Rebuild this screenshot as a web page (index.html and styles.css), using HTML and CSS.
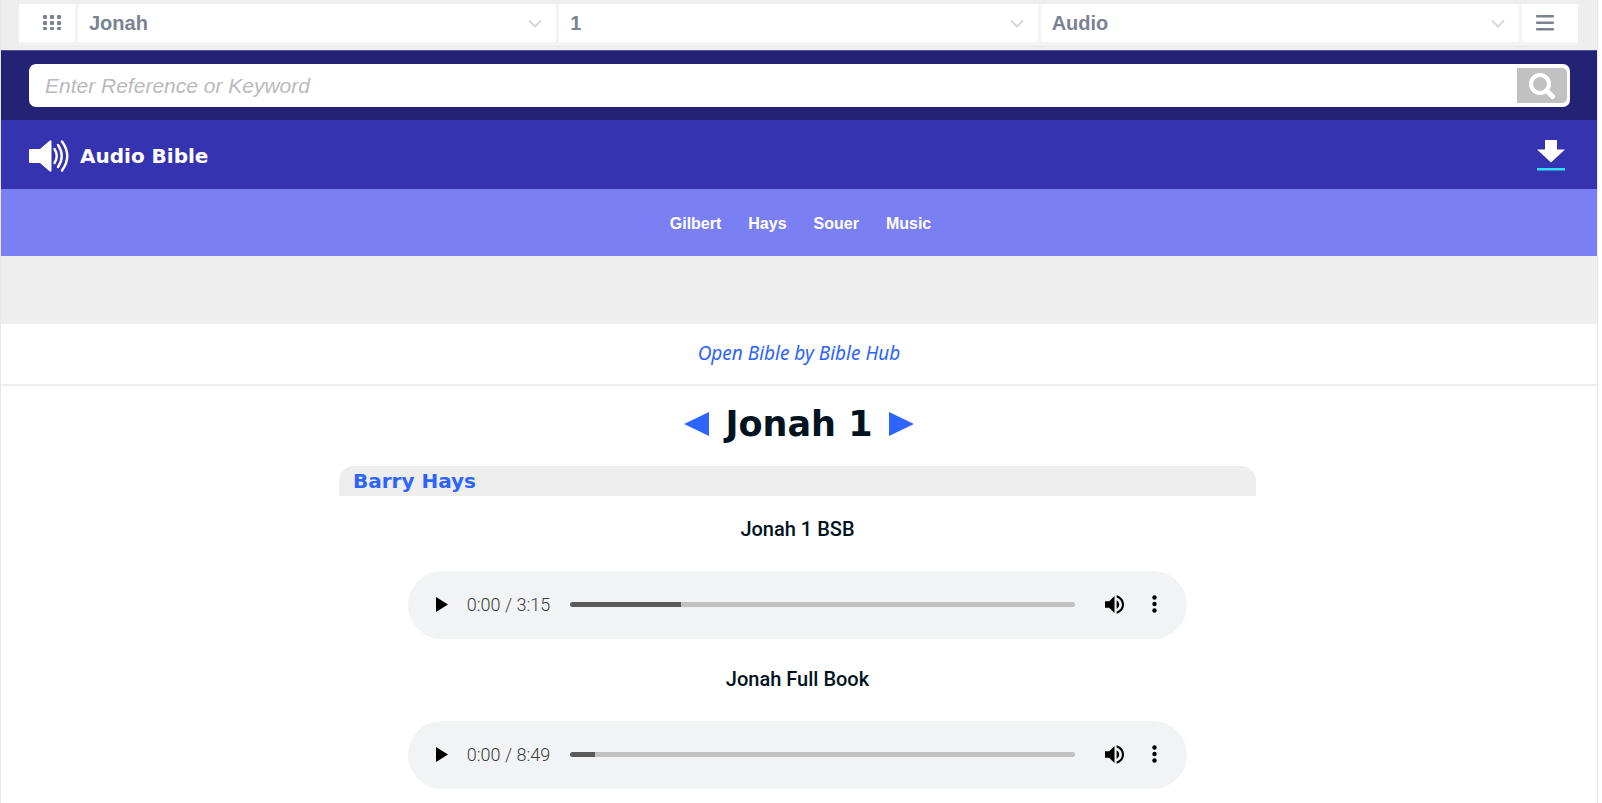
FILE: index.html
```html
<!DOCTYPE html>
<html lang="en">

<head>
    <meta charset="UTF-8">
    <meta name="viewport" content="width=device-width, initial-scale=1.0">
    <title>Jonah 1 Audio Bible</title>
    <link rel="stylesheet" href="styles.css">
</head>

<body>
    <div class="page">
        <div class="topbar">
            <div class="picker">
                <button class="picker-btn" aria-label="All books">
                    <svg width="20" height="18" viewBox="0 0 20 18" fill="#7b8392">
                        <rect x="1" y="1" width="4" height="4" rx="1"/><rect x="8" y="1" width="4" height="4" rx="1"/><rect x="15" y="1" width="4" height="4" rx="1"/>
                        <rect x="1" y="7" width="4" height="4" rx="1"/><rect x="8" y="7" width="4" height="4" rx="1"/><rect x="15" y="7" width="4" height="4" rx="1"/>
                        <rect x="1" y="13" width="4" height="3" rx="1"/><rect x="8" y="13" width="4" height="3" rx="1"/><rect x="15" y="13" width="4" height="3" rx="1"/>
                    </svg>
                </button>
                <div class="picker-select">
                    <select aria-label="Book"><option>Jonah</option></select>
                    <svg width="14" height="9" viewBox="0 0 14 9" fill="none" stroke="#d3d8dd" stroke-width="2"><path d="M1 1.5l6 6 6-6"/></svg>
                </div>
                <div class="picker-select">
                    <select aria-label="Chapter"><option>1</option></select>
                    <svg width="14" height="9" viewBox="0 0 14 9" fill="none" stroke="#d3d8dd" stroke-width="2"><path d="M1 1.5l6 6 6-6"/></svg>
                </div>
                <div class="picker-select">
                    <select aria-label="Version"><option>Audio</option></select>
                    <svg width="14" height="9" viewBox="0 0 14 9" fill="none" stroke="#d3d8dd" stroke-width="2"><path d="M1 1.5l6 6 6-6"/></svg>
                </div>
                <button class="picker-btn menu-btn" aria-label="Menu">
                    <svg width="18" height="16" viewBox="0 0 18 16" fill="#7b8392">
                        <rect width="18" height="2.5" rx="1"/><rect y="6.500" width="18" height="2.5" rx="1"/><rect y="13" width="18" height="2.5" rx="1"/>
                    </svg>
                </button>
            </div>
        </div>

        <div class="search-band">
            <form class="search">
                <input type="text" placeholder="Enter Reference or Keyword" aria-label="Search">
                <button type="button" aria-label="Go">
                    <svg width="28" height="26" viewBox="0 0 28 26" fill="none" stroke="#fff">
                        <circle cx="12" cy="11" r="9" stroke-width="4"/>
                        <path d="M18.5 17.5l6 6" stroke-width="5" stroke-linecap="round"/>
                    </svg>
                </button>
            </form>
        </div>

        <div class="title-band">
            <a class="logo" href="#">
                <svg width="40" height="32" viewBox="0 0 40 32" fill="#fff">
                    <path d="M0 10q0-1 1-1h10L20.500.7q2-1.400 2 .8v29q0 2-2 .8L11 23H1q-1 0-1-1z"/>
                    <g fill="none" stroke="#fff" stroke-width="2.400" stroke-linecap="round">
                        <path d="M25.500 9q4.500 7 0 14"/>
                        <path d="M29 5q7.500 11 0 22"/>
                        <path d="M33 1.500q10.500 14.500 0 29"/>
                    </g>
                </svg>
                <span>Audio Bible</span>
            </a>
            <a class="download" href="#" aria-label="Download">
                <svg width="28" height="31" viewBox="0 0 28 31">
                    <path d="M8 0h12v9.500h8L14 22.500 0 9.500h8z" fill="#fff"/>
                    <rect y="28" width="28" height="2.500" fill="#2ee0f5"/>
                </svg>
            </a>
        </div>

        <nav class="readers">
            <a href="#">Gilbert</a>
            <a href="#">Hays</a>
            <a href="#">Souer</a>
            <a href="#">Music</a>
        </nav>

        <div class="spacer"></div>

        <div class="credit"><a href="#">Open Bible by Bible Hub</a></div>

        <main>
            <div class="chapter">
                <a href="#" aria-label="Previous chapter"><svg width="25" height="24" viewBox="0 0 25 24"><path d="M25 0v24L0 12z" fill="#2d63ff"/></svg></a>
                <h1>Jonah 1</h1>
                <a href="#" aria-label="Next chapter"><svg width="25" height="24" viewBox="0 0 25 24"><path d="M0 0v24l25-12z" fill="#2d63ff"/></svg></a>
            </div>

            <div class="content">
                <section class="reader">
                    <h2><a href="#">Barry Hays</a></h2>

                    <h3>Jonah 1 BSB</h3>
                    <div class="player">
                        <button class="play" aria-label="Play"><svg width="12" height="15" viewBox="0 0 12 15"><path d="M0 0v15l12-7.500z"/></svg></button>
                        <span class="time">0:00 / 3:15</span>
                        <input type="range" value="0" aria-label="Seek" style="--loaded: 22%">
                        <button class="volume" aria-label="Mute">
                            <svg width="19" height="19" viewBox="3 3 18 18"><path d="M3 9v6h4l5 5V4L7 9H3zm13.500 3c0-1.770-1.020-3.290-2.500-4.030v8.050c1.480-.730 2.500-2.250 2.500-4.020zM14 3.230v2.060c2.890.860 5 3.540 5 6.710s-2.110 5.850-5 6.710v2.060c4.010-.910 7-4.490 7-8.770s-2.990-7.860-7-8.770z"/></svg>
                        </button>
                        <button class="more" aria-label="More options"><svg width="5" height="18" viewBox="0 0 5 18"><circle cx="2.500" cy="2.500" r="2.200"/><circle cx="2.500" cy="9" r="2.200"/><circle cx="2.500" cy="15.500" r="2.200"/></svg></button>
                    </div>

                    <h3>Jonah Full Book</h3>
                    <div class="player">
                        <button class="play" aria-label="Play"><svg width="12" height="15" viewBox="0 0 12 15"><path d="M0 0v15l12-7.500z"/></svg></button>
                        <span class="time">0:00 / 8:49</span>
                        <input type="range" value="0" aria-label="Seek" style="--loaded: 5%">
                        <button class="volume" aria-label="Mute">
                            <svg width="19" height="19" viewBox="3 3 18 18"><path d="M3 9v6h4l5 5V4L7 9H3zm13.500 3c0-1.770-1.020-3.290-2.500-4.030v8.050c1.480-.730 2.500-2.250 2.500-4.020zM14 3.230v2.060c2.890.860 5 3.540 5 6.710s-2.110 5.850-5 6.710v2.060c4.010-.910 7-4.490 7-8.770s-2.990-7.860-7-8.770z"/></svg>
                        </button>
                        <button class="more" aria-label="More options"><svg width="5" height="18" viewBox="0 0 5 18"><circle cx="2.500" cy="2.500" r="2.200"/><circle cx="2.500" cy="9" r="2.200"/><circle cx="2.500" cy="15.500" r="2.200"/></svg></button>
                    </div>
                </section>
            </div>
        </main>
    </div>
</body>

</html>
```

FILE: styles.css
```css
* {
    box-sizing: border-box;
}

body {
    margin: 0;
    background: #fff;
    color: #001320;
    font-family: "Liberation Sans", Arial, sans-serif;
}

a {
    color: #2d63ff;
    text-decoration: none;
}

button {
    padding: 0;
    border: none;
    background: none;
    cursor: pointer;
}

svg {
    display: block;
}

.page {
    min-height: 100vh;
    margin-right: 4px;
    border-left: 1px solid #e8e8e8;
    border-right: 1px solid #e8e8e8;
}

/* Book / chapter / version selection */
.topbar {
    padding: 4px 19px 5px 18px;
    background: #eee;
    border-bottom: 1px solid #514f93;
}

.picker {
    display: flex;
    gap: 3px;
    border-bottom: 3px solid #f4f4f4;
    background: #f4f4f4;
}

.picker-btn {
    display: flex;
    align-items: center;
    width: 56px;
    height: 38px;
    padding-left: 23px;
    background: #fff;
}

.menu-btn {
    padding-left: 14px;
}

.picker-select {
    display: flex;
    flex: 1;
    align-items: center;
    position: relative;
    background: #fff;
}

.picker-select select {
    width: 100%;
    height: 38px;
    padding: 0 40px 0 11px;
    border: none;
    appearance: none;
    background: none;
    color: #7b8392;
    font: bold 20px "Liberation Sans", Arial, sans-serif;
}

.picker-select svg {
    position: absolute;
    right: 14px;
    pointer-events: none;
}

/* Search */
.search-band {
    padding: 13px 27px 13px 28px;
    background: #242275;
}

.search {
    display: flex;
    height: 43px;
    padding: 4px 3px 4px 0;
    border-radius: 7px;
    background: #fff;
}

.search input {
    flex: 1;
    padding: 0 16px;
    border: none;
    background: none;
    font: italic 21px "Liberation Sans", Arial, sans-serif;
}

.search input::placeholder {
    color: #bababa;
}

.search button {
    display: flex;
    align-items: center;
    justify-content: center;
    width: 50px;
    border-radius: 0 5px 5px 0;
    background: #c1c1c1;
}

/* Title */
.title-band {
    display: flex;
    align-items: center;
    justify-content: space-between;
    height: 69px;
    padding: 2px 32px 0 28px;
    background: #3633b0;
}

.logo {
    display: flex;
    align-items: center;
    gap: 11px;
    color: #fff;
    font: bold 20px "DejaVu Sans", Verdana, sans-serif;
}

.readers {
    display: flex;
    align-items: center;
    justify-content: center;
    gap: 27px;
    height: 67px;
    padding: 2px 0 0 3px;
    background: #7a7ff3;
}

.readers a {
    color: #fff;
    font-size: 16px;
    font-weight: bold;
}

.spacer {
    height: 68px;
    background: #eee;
}

.credit {
    padding: 17px 0 18px;
    border-bottom: 2px solid #eee;
    text-align: center;
    font: italic 19px/25px "Noto Sans", sans-serif;
}

/* Chapter heading */
.chapter {
    display: flex;
    align-items: center;
    justify-content: center;
    gap: 16px;
    padding: 16px 0 20px;
}

.chapter h1 {
    margin: 0;
    font: bold 35px/44px "DejaVu Sans", Verdana, sans-serif;
}

.content {
    padding-right: 3px;
}

.reader {
    max-width: 917px;
    margin: 0 auto;
    text-align: center;
}

.reader h2 {
    margin: 0;
    padding: 0 14px;
    border-radius: 15px 15px 0 0;
    background: #eee;
    text-align: left;
    font: bold 20px/30px "DejaVu Sans", Verdana, sans-serif;
}

.reader h3 {
    margin: 21px 0 30px;
    font: 500 20px/24px Roboto, sans-serif;
}

/* Audio player */
.player {
    display: flex;
    align-items: center;
    width: 85%;
    height: 68px;
    margin: 0 auto 28px;
    padding: 0 30px 2px 28px;
    border-radius: 34px;
    background: #f1f3f4;
}

.time {
    margin: 0 20px 0 19px;
    color: #3c3c3c;
    font: 300 18px Roboto, sans-serif;
}

.player input {
    flex: 1;
    min-width: 0;
    height: 5px;
    margin: 0 30px 0 0;
    border-radius: 3px;
    appearance: none;
    background: linear-gradient(#5a5a5a, #5a5a5a) 0 / var(--loaded) 100% no-repeat #c2c2c2;
}

.player input::-webkit-slider-thumb {
    appearance: none;
    width: 0;
    height: 0;
}

.volume {
    margin-right: 28px;
}
```
